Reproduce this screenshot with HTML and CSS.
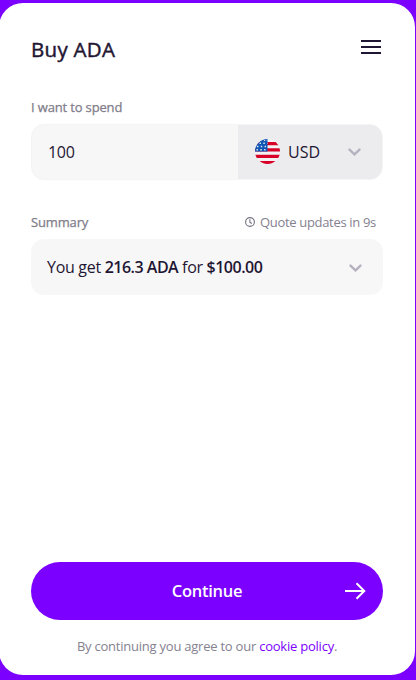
FILE: index.html
```html
<!DOCTYPE html>
<html lang="en">
<head>
  <meta charset="UTF-8" />
  <title>Buy ADA</title>
  <meta name="viewport" content="width=device-width, initial-scale=1.0" />
  <link rel="stylesheet" href="styles.css">
</head>
<body>

<main class="widget">
  <header class="top">
    <h1>Buy ADA</h1>
    <button class="menu-btn" aria-label="Menu">
      <svg width="20" height="14" viewBox="0 0 20 14" shape-rendering="crispEdges">
        <path d="M0 1h20M0 7h20M0 13h20" stroke="#1f1633" stroke-width="2" />
      </svg>
    </button>
  </header>

  <label class="label" for="amount">I want to spend</label>
  <div class="amount-box">
    <input class="amount" id="amount" type="text" value="100" />
    <button class="currency">
      <svg class="flag" width="25" height="25" viewBox="0 0 25 25">
        <clipPath id="flag-clip"><circle cx="12.5" cy="12.5" r="12.5" /></clipPath>
        <g clip-path="url(#flag-clip)">
          <rect width="25" height="25" fill="#f3f1f4" />
          <path d="M0 4.6h25M0 10.9h25M0 17.3h25M0 23.6h25" stroke="#d80027" stroke-width="3.2" />
          <rect width="12.5" height="12.5" fill="#0f55b4" />
          <path d="M4.5 4.2h8M2 7.5h10M1.5 10.7h11" stroke="#d5e2f2" stroke-width="1.4" stroke-dasharray="1.5 2.3" />
          <path d="M9 1.5h3" stroke="#d5e2f2" stroke-width="1" stroke-dasharray="1.2 1.4" />
        </g>
      </svg>
      <span class="code">USD</span>
      <svg class="chevron" width="13" height="8" viewBox="0 0 13 8">
        <path d="M1.5 1.6l5 4.8 5-4.8" />
      </svg>
    </button>
  </div>

  <div class="summary-head">
    <span class="label">Summary</span>
    <span class="quote">
      <svg width="10" height="10" viewBox="0 0 10 10" fill="none" stroke="#746f80" stroke-width="1.1">
        <circle cx="5" cy="5" r="4.4" />
        <path d="M4.9 2.3v2.8l1.9 1.4" />
      </svg>
      <span>Quote updates in 9s</span>
    </span>
  </div>
  <div class="summary">
    <p>You get <b>216.3 ADA</b> for <b>$100.00</b></p>
    <svg class="chevron" width="13" height="8" viewBox="0 0 13 8">
      <path d="M1.5 1.6l5 4.8 5-4.8" />
    </svg>
  </div>

  <footer>
    <button class="continue">
      <span>Continue</span>
      <svg class="arrow" width="21" height="18" viewBox="0 0 21 18">
        <path d="M0 9h19.5M11.5 1.2L19.3 9l-7.8 7.8" />
      </svg>
    </button>
    <p class="terms">By continuing you agree to our <a href="#">cookie policy</a>.</p>
  </footer>
</main>

</body>
</html>
```
FILE: styles.css
```css
* { box-sizing: border-box; }

body {
  margin: 0;
  height: 100vh;
  padding: 3px 1px 5px 0;
  background: #7b00ff;
  font-family: 'Open Sans', 'Noto Sans', sans-serif;
  color: #1f1633;
  overflow: hidden;
}

button {
  border: none;
  padding: 0;
  background: none;
  font: inherit;
  color: inherit;
  cursor: pointer;
}

svg { display: block; }
p { margin: 0; }

.widget {
  display: flex;
  flex-direction: column;
  height: 672px;
  margin-left: -1px;
  padding: 30px 32px 19px;
  background: #fff;
  border-radius: 24px;
  white-space: nowrap;
}

.top {
  display: flex;
  justify-content: space-between;
  height: 64px;
}

h1 {
  margin: 0;
  font-size: 20.5px;
  line-height: 32px;
  font-weight: 400;
  letter-spacing: 0.3px;
  -webkit-text-stroke: 0.45px;
}

.menu-btn {
  height: 14px;
  margin: 7px 2px 0 0;
}

.label {
  font-size: 13px;
  line-height: 20px;
  font-weight: 400;
  letter-spacing: -0.15px;
  -webkit-text-stroke: 0.25px;
  color: #807c8a;
}

.amount-box {
  display: flex;
  height: 56px;
  margin-top: 7px;
  background: #f7f7f7;
  border: 1px solid #f4f4f5;
  border-radius: 13px;
  overflow: hidden;
}

.amount {
  flex: 1;
  min-width: 0;
  padding: 0 16px 1px;
  border: none;
  outline: none;
  background: transparent;
  font: 400 16px 'Open Sans', 'Noto Sans', sans-serif;
  letter-spacing: -0.3px;
  color: #1f1633;
}

.currency {
  display: flex;
  align-items: center;
  width: 144px;
  padding: 0 21px 2px 17px;
  background: #ececee;
  font-size: 16px;
}

.code { margin: 2px 0 0 8px; }

.chevron {
  margin: 1px 0 0 auto;
  fill: none;
  stroke: #b6b2c0;
  stroke-width: 2.4;
  stroke-linecap: round;
}

.summary-head {
  display: flex;
  justify-content: space-between;
  margin-top: 32px;
}

.quote {
  display: flex;
  align-items: center;
  height: 20px;
  gap: 5px;
  margin-right: 7px;
  font-size: 13px;
  line-height: 20px;
  letter-spacing: -0.32px;
  color: #85818f;
}

.summary {
  display: flex;
  align-items: center;
  height: 56px;
  margin-top: 7px;
  padding: 0 21px 0 16px;
  background: #f7f7f7;
  border-radius: 13px;
  font-size: 16px;
  letter-spacing: -0.3px;
}

.summary b {
  font-weight: 600;
  letter-spacing: -0.5px;
}

footer { margin-top: auto; }

.continue {
  position: relative;
  width: 100%;
  height: 58px;
  background: #7b00ff;
  border-radius: 29px;
  color: #fff;
  font-size: 16.5px;
  font-weight: 600;
  letter-spacing: -0.25px;
}

.continue span {
  display: block;
  margin-top: -2px;
}

.arrow {
  position: absolute;
  top: 20px;
  right: 17px;
  fill: none;
  stroke: #fff;
  stroke-width: 2;
}

.terms {
  margin-top: 16px;
  font-size: 13px;
  line-height: 20px;
  letter-spacing: -0.23px;
  text-align: center;
  color: #85818f;
}

.terms a {
  color: #7b00ff;
  text-decoration: none;
}
```
